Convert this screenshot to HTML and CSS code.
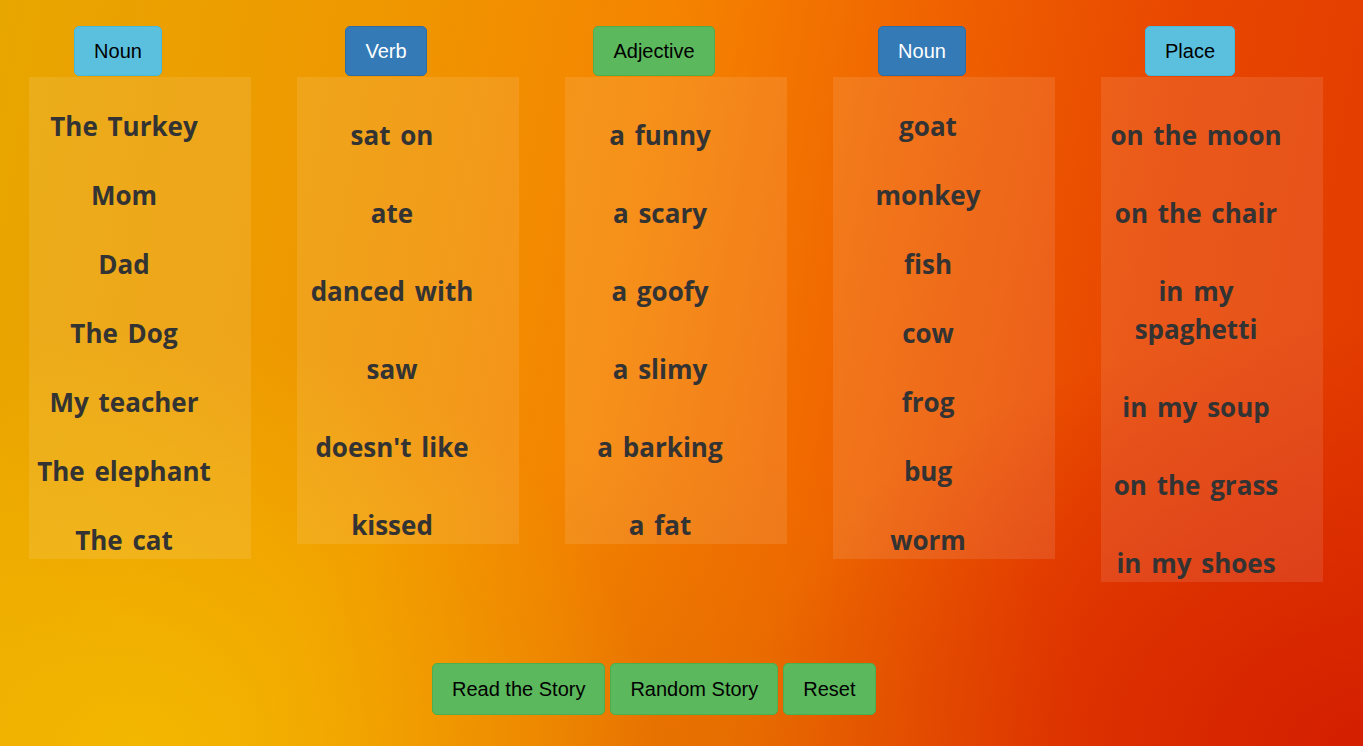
FILE: index.html
```html
<!DOCTYPE html>
<html>
<head>
<meta charset="utf-8">
<link rel="stylesheet" href="styles.css">
</head>
<body>
<div class="page">
  <div class="columns">
    <div class="col">
      <div class="head"><span class="btn info">Noun</span></div>
      <div class="box tight">
        <div class="word">The Turkey</div>
        <div class="word">Mom</div>
        <div class="word">Dad</div>
        <div class="word">The Dog</div>
        <div class="word">My teacher</div>
        <div class="word">The elephant</div>
        <div class="word">The cat</div>
      </div>
    </div>
    <div class="col">
      <div class="head"><span class="btn primary">Verb</span></div>
      <div class="box loose">
        <div class="word">sat on</div>
        <div class="word">ate</div>
        <div class="word">danced with</div>
        <div class="word">saw</div>
        <div class="word">doesn't like</div>
        <div class="word">kissed</div>
      </div>
    </div>
    <div class="col">
      <div class="head"><span class="btn success">Adjective</span></div>
      <div class="box loose">
        <div class="word">a funny</div>
        <div class="word">a scary</div>
        <div class="word">a goofy</div>
        <div class="word">a slimy</div>
        <div class="word">a barking</div>
        <div class="word">a fat</div>
      </div>
    </div>
    <div class="col">
      <div class="head"><span class="btn primary">Noun</span></div>
      <div class="box tight">
        <div class="word">goat</div>
        <div class="word">monkey</div>
        <div class="word">fish</div>
        <div class="word">cow</div>
        <div class="word">frog</div>
        <div class="word">bug</div>
        <div class="word">worm</div>
      </div>
    </div>
    <div class="col">
      <div class="head"><span class="btn info">Place</span></div>
      <div class="box loose">
        <div class="word">on the moon</div>
        <div class="word">on the chair</div>
        <div class="word">in my spaghetti</div>
        <div class="word">in my soup</div>
        <div class="word">on the grass</div>
        <div class="word">in my shoes</div>
      </div>
    </div>
  </div>
  <div class="actions">
    <span class="btn success big">Read the Story</span>
    <span class="btn success big">Random Story</span>
    <span class="btn success big">Reset</span>
  </div>
</div>
</body>
</html>
```

FILE: styles.css
```css
html, body {
  margin: 0;
  padding: 0;
  height: 100%;
}
body {
  width: 1363px;
  height: 746px;
  overflow: hidden;
  font-family: "Liberation Sans", Arial, sans-serif;
  background:
    radial-gradient(ellipse 520px 420px at 10% 100%, rgba(244,186,0,0.9), rgba(244,186,0,0) 100%),
    radial-gradient(ellipse 620px 420px at 100% 100%, rgba(210,28,0,0.9), rgba(210,28,0,0) 100%),
    radial-gradient(ellipse 420px 300px at 50% 100%, rgba(222,110,0,0.6), rgba(222,110,0,0) 100%),
    linear-gradient(100deg, #e8a600 0%, #ef9800 25%, #f58400 45%, #f06400 62%, #e84600 80%, #e23a00 100%);
}
.page {
  padding-top: 26px;
}
.columns {
  display: flex;
  gap: 46px;
  padding-left: 29px;
  align-items: flex-start;
}
.col {
  width: 222px;
}
.head {
  width: 178px;
  display: flex;
  justify-content: center;
  padding-bottom: 1px;
}
.btn {
  display: inline-block;
  font-size: 20px;
  line-height: 28px;
  padding: 10px 19px;
  border: 1px solid transparent;
  border-radius: 5px;
  color: #000;
}
.info {
  background: #5bc0de;
  border-color: #46b8da;
}
.primary {
  background: #337ab7;
  border-color: #2e6da4;
  color: #fff;
}
.success {
  background: #5cb85c;
  border-color: #4cae4c;
}
.box {
  display: flow-root;
  background: rgba(255, 255, 255, 0.1);
  width: 222px;
  padding-right: 32px;
  box-sizing: border-box;
}
.word {
  font-family: "Open Sans", sans-serif;
  font-weight: 700;
  font-size: 26px;
  line-height: 38px;
  word-spacing: 3px;
  color: #333;
  text-align: center;
}
.tight .word {
  margin-top: 31px;
}
.tight .word:first-child {
  margin-top: 30px;
}
.loose .word {
  margin-top: 40px;
}
.loose .word:first-child {
  margin-top: 39px;
}
.actions {
  position: absolute;
  top: 663px;
  left: 432px;
  display: flex;
  gap: 5px;
}
.big {
  padding: 11px 19px;
  line-height: 28px;
}
```
